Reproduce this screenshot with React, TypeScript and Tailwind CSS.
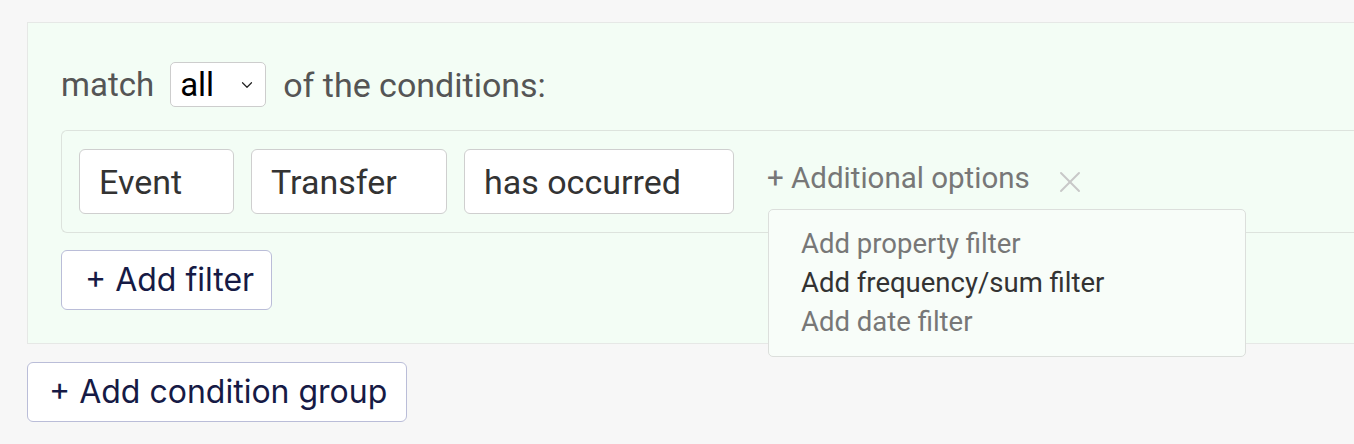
import { ChevronDown, X } from "lucide-react";

const FIELDS: { label: string; w: string }[] = [
  { label: "Event", w: "w-[155px]" },
  { label: "Transfer", w: "w-[196px]" },
  { label: "has occurred", w: "w-[270px]" },
];

const MENU = [
  { label: "Add property filter", active: false },
  { label: "Add frequency/sum filter", active: true },
  { label: "Add date filter", active: false },
];

export default function App() {
  return (
    <div className="h-[444px] w-[1354px] overflow-hidden bg-[#f7f7f7] font-['Roboto',sans-serif]">
      <div className="pt-[22px] pl-[27px]">
        {/* condition group */}
        <section className="w-[1400px] border border-[#e6e8e6] bg-[#f3fdf5] pt-[39px] pr-0 pb-[33px] pl-[33px]">
          <div className="flex h-[45px] items-center text-[34px] leading-none text-[#555]">
            <span className="text-[33px]">match</span>
            <div className="ml-[16px] flex h-[45px] w-[96px] items-center justify-between rounded-[5px] border border-[#cdcdcd] bg-white pr-[9px] pl-[9px] text-[33px] text-black">
              <span className="leading-none">all</span>
              <ChevronDown size={18} strokeWidth={1.6} className="text-[#222]" />
            </div>
            <span className="ml-[17px]">of the conditions:</span>
          </div>

          <div className="relative mt-[23px] flex items-center rounded-l-[6px] border border-r-0 border-[#dde3dd] bg-[#f3fdf5] py-[18px] pl-[17px]">
            <div className="flex gap-[17px]">
              {FIELDS.map((f) => (
                <div
                  key={f.label}
                  className={`flex h-[65px] ${f.w} items-center rounded-[6px] border border-[#cfcfcf] bg-white pl-[19px] text-[34px] leading-none text-[#333]`}
                >
                  {f.label}
                </div>
              ))}
            </div>
            <span className="ml-[33px] -mt-[6px] text-[29.5px] leading-none text-[#777]">+ Additional options</span>
            <X size={36} strokeWidth={1.3} className="ml-[22px] text-[#c8c8c8]" />

            {/* dropdown */}
            <div className="absolute top-[78px] left-[706px] z-10 flex h-[148px] w-[478px] flex-col justify-center gap-[9px] rounded-[5px] border border-[#dcdfdc] bg-[#f8fdf9] pl-[32px] text-[27.5px] leading-[30px] text-[#777]">
              {MENU.map((m) => (
                <div key={m.label} className={m.active ? "text-[#333]" : ""}>
                  {m.label}
                </div>
              ))}
            </div>
          </div>

          <button className="mt-[17px] flex h-[60px] w-[211px] items-center rounded-[6px] border border-[#babdd8] bg-white pl-[23px] font-['Inter',sans-serif] text-[32px] leading-none text-[#161a45]">
            + Add filter
          </button>
        </section>

        <button className="mt-[18px] flex h-[60px] w-[380px] items-center rounded-[6px] border border-[#babdd8] bg-white pl-[21px] font-['Inter',sans-serif] text-[32px] leading-none text-[#161a45]">
          + Add condition group
        </button>
      </div>
    </div>
  );
}
